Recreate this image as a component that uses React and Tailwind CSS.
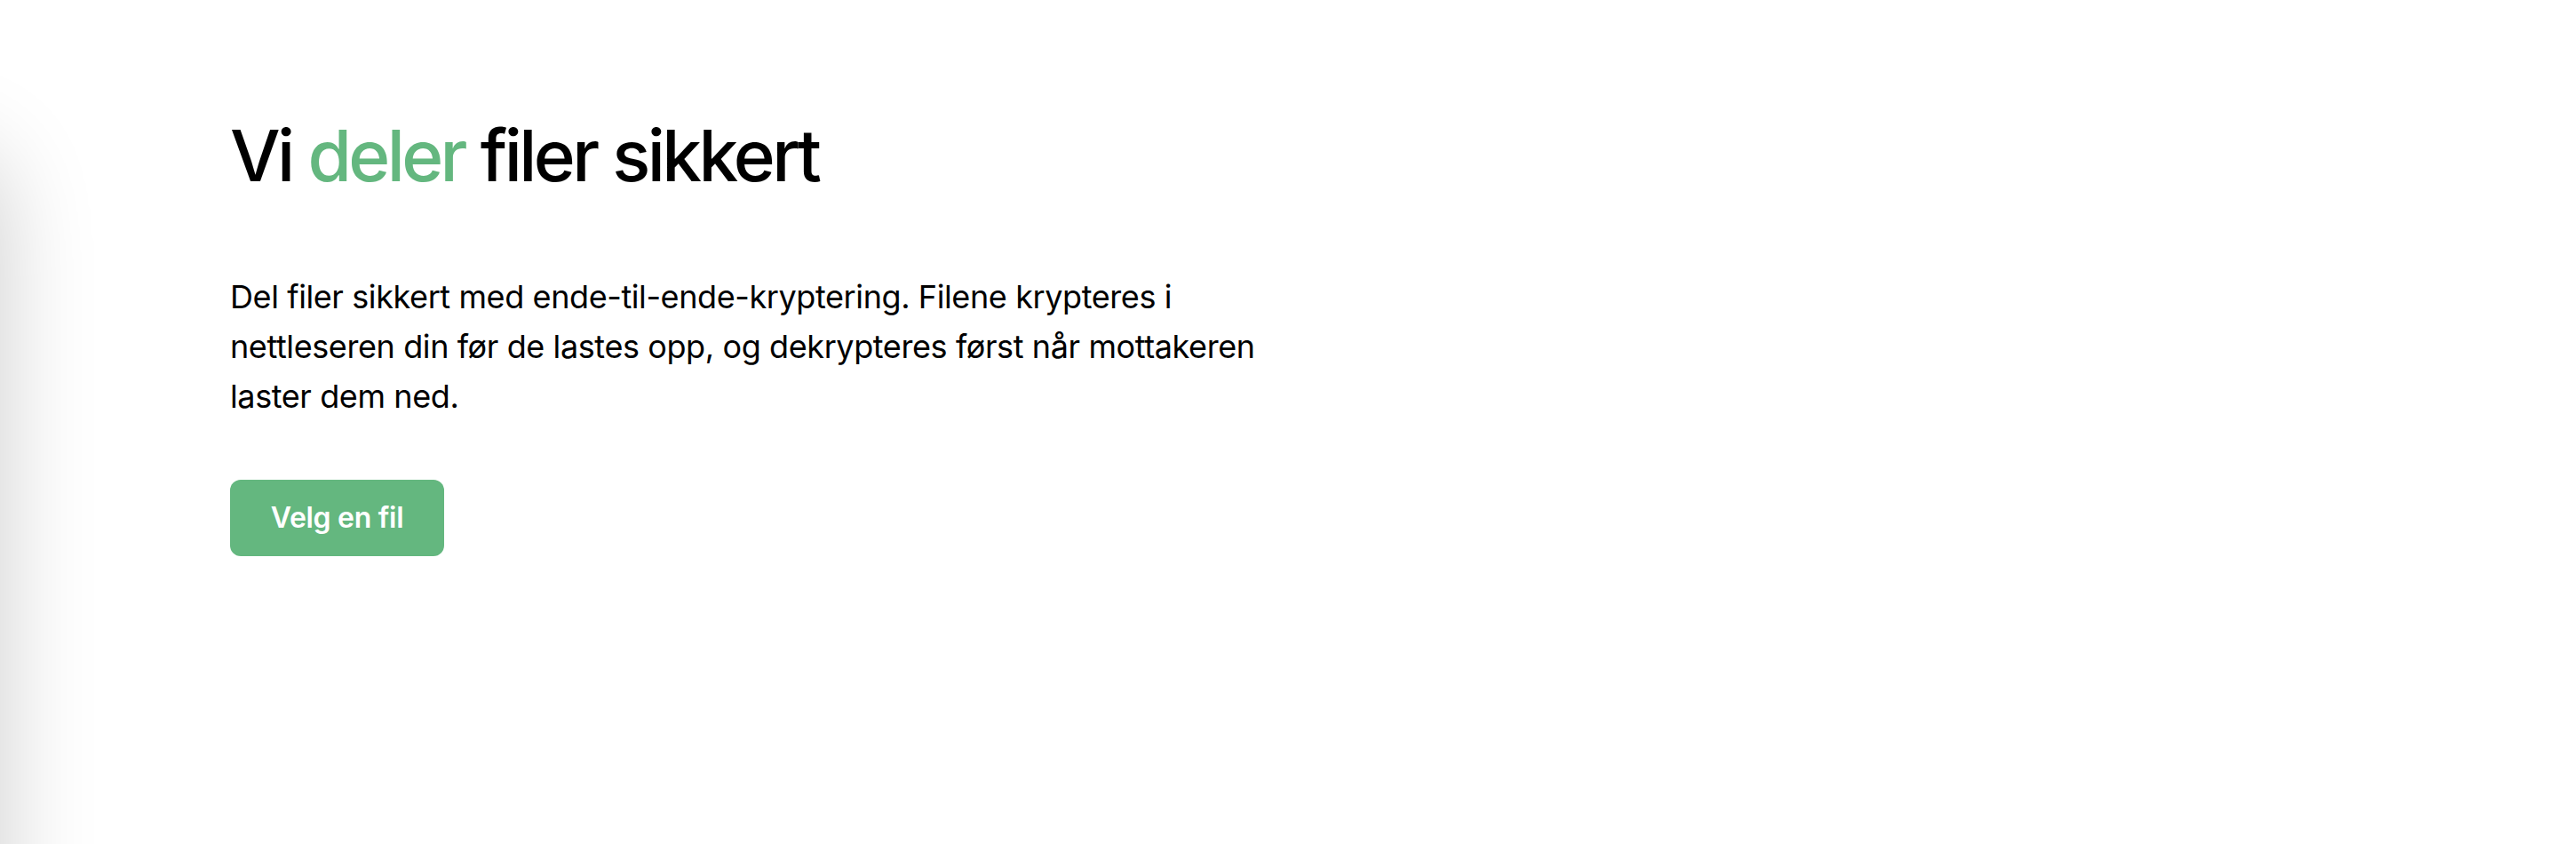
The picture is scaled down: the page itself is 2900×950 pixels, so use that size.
export default function App() {
  return (
    <div className="relative min-h-[950px] w-full overflow-hidden bg-white font-['Inter','Noto_Sans',sans-serif] text-black">
      <div className="pointer-events-none absolute left-[-300px] top-[170px] h-[1400px] w-[300px] rounded-[60px] bg-white shadow-[0_0_110px_rgba(0,0,0,0.2)]" />
      <main className="flex flex-col items-start pl-[259px] pt-[135px]">
        <h1 className="text-[80px] font-medium leading-none tracking-[-3.6px]">
          Vi <span className="text-[#64b77f]">deler</span> filer sikkert
        </h1>
        <p className="mt-[91px] max-w-[1220px] text-[36px] leading-[56px] tracking-[-0.4px]">
          Del filer sikkert med ende-til-ende-kryptering. Filene krypteres i nettleseren din før de lastes opp, og dekrypteres først når mottakeren laster dem ned.
        </p>
        <button className="mt-[66px] flex h-[86px] w-[241px] items-center justify-center rounded-[12px] bg-[#64b77f] text-[32px] font-semibold tracking-[-0.3px] text-white">
          Velg en fil
        </button>
      </main>
    </div>
  );
}
